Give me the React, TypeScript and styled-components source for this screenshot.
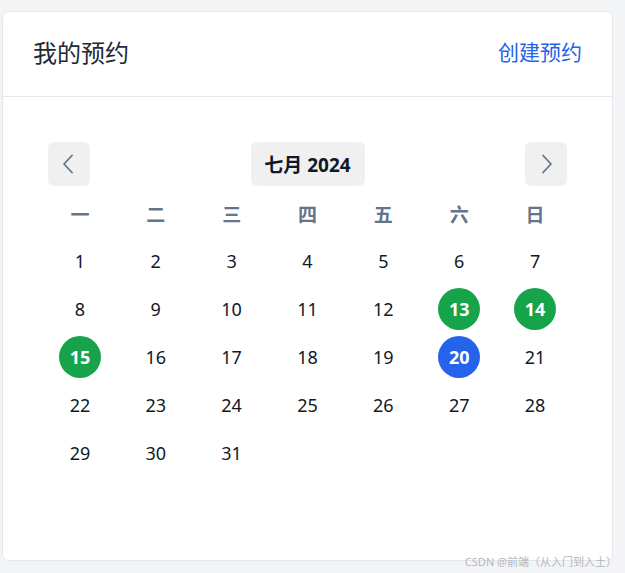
import styled, { createGlobalStyle } from "styled-components";

const GlobalStyle = createGlobalStyle`
  body {
    margin: 0;
    background-color: #F3F4F6;
    font-family: "Noto Sans", "Noto Sans CJK SC", sans-serif;
  }
`

const Page = styled.div`
  position: relative;
  height: 573px;
  padding: 11px 0 0 2px;
  box-sizing: border-box;
`

const Card = styled.div`
  background-color: #FFF;
  border: 1px solid #E5E7EB;
  border-radius: 6px;
  box-sizing: border-box;
  height: 550px;
  width: 611px;
`

const Card__Header = styled.div`
  align-items: center;
  border-bottom: 1px solid #E5E7EB;
  box-sizing: border-box;
  display: flex;
  height: 85px;
  justify-content: space-between;
  padding: 0 30px 3px 30px;
`

const Card__Title = styled.h2`
  color: #1F2937;
  font-size: 24px;
  font-weight: 400;
  line-height: 1;
  margin: 0;
`

const Card__Link = styled.a`
  color: #2563EB;
  cursor: pointer;
  font-size: 21px;
  line-height: 1;
  text-decoration: none;
`

const Calendar = styled.div`
  padding: 45px 39px 0;
`

const Calendar__Nav = styled.div`
  align-items: center;
  display: flex;
  justify-content: space-between;
  margin: 0 6px 5px;
`

const NavButton = styled.button<{ $wide?: boolean }>`
  align-items: center;
  background-color: #F0F0F0;
  border: none;
  border-radius: 6px;
  color: ${p => (p.$wide ? "#111827" : "#64748B")};
  display: flex;
  font-family: "Noto Sans", "Noto Sans CJK SC", sans-serif;
  font-size: 19px;
  font-weight: 700;
  height: 44px;
  justify-content: center;
  padding: 0 ${p => (p.$wide ? "10px" : "0")};
  width: ${p => (p.$wide ? "114px" : "42px")};
`

const Grid = styled.div`
  display: grid;
  grid-auto-rows: 48px;
  grid-template-columns: repeat(7, 1fr);
  grid-template-rows: 46px;
`

const Weekday = styled.div`
  align-items: center;
  color: #64748B;
  display: flex;
  font-size: 19px;
  font-weight: 700;
  justify-content: center;
`

const Day = styled.div`
  align-items: center;
  display: flex;
  justify-content: center;
`

const DayNumber = styled.span<{ $mark?: "green" | "blue" }>`
  align-items: center;
  background-color: ${p => (p.$mark === "green" ? "#16A34A" : p.$mark === "blue" ? "#2563EB" : "transparent")};
  border-radius: 50%;
  color: ${p => (p.$mark ? "#FFF" : "#111827")};
  display: flex;
  font-size: 18px;
  font-weight: ${p => (p.$mark ? 700 : 400)};
  height: 42px;
  justify-content: center;
  width: 42px;
`

const Watermark = styled.div`
  bottom: 4px;
  color: #B4B8BF;
  font-size: 11px;
  position: absolute;
  right: 8px;
`

const weekdays = ["一", "二", "三", "四", "五", "六", "日"]
const marks: Record<number, "green" | "blue"> = { 13: "green", 14: "green", 15: "green", 20: "blue" }

const Chevron = ({ dir }: { dir: "left" | "right" }) => (
  <svg width="24" height="24" viewBox="0 0 24 24" fill="none" stroke="currentColor" strokeWidth="1.8" strokeLinecap="round" strokeLinejoin="round">
    <path d={dir === "left" ? "M15 3.5 7 12l8 8.5" : "M9 3.5l8 8.5-8 8.5"} />
  </svg>
)

const App = () => {
  const days = Array.from({ length: 31 }, (_, i) => i + 1)
  return (
    <Page>
      <GlobalStyle />
      <Card>
        <Card__Header>
          <Card__Title>我的预约</Card__Title>
          <Card__Link>创建预约</Card__Link>
        </Card__Header>
        <Calendar>
          <Calendar__Nav>
            <NavButton><Chevron dir="left" /></NavButton>
            <NavButton $wide>七月 2024</NavButton>
            <NavButton><Chevron dir="right" /></NavButton>
          </Calendar__Nav>
          <Grid>
            {weekdays.map(w => <Weekday key={w}>{w}</Weekday>)}
            {days.map(d => (
              <Day key={d}>
                <DayNumber $mark={marks[d]}>{d}</DayNumber>
              </Day>
            ))}
          </Grid>
        </Calendar>
      </Card>
      <Watermark>CSDN @前端（从入门到入土）</Watermark>
    </Page>
  )
}

export default App
